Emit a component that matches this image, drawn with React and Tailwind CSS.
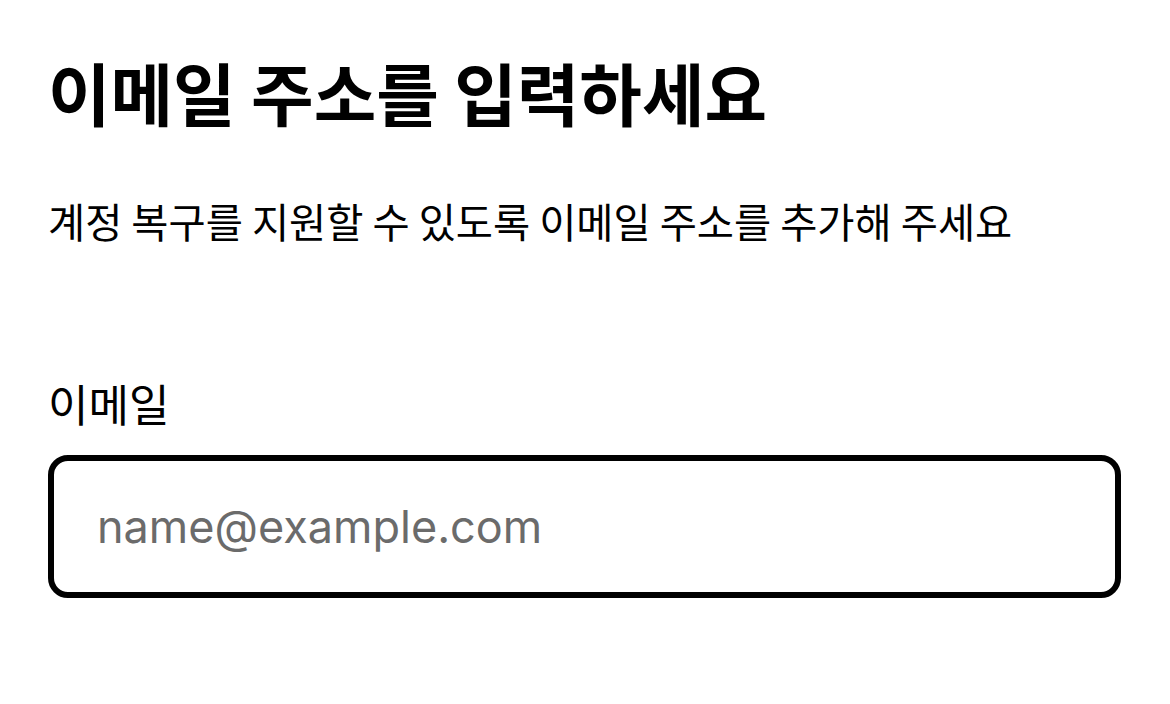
export default function App() {
  return (
    <div
      className="min-h-[704px] w-full bg-white px-[48px] pt-[54px] text-black"
      style={{ fontFamily: '"Noto Sans CJK KR", "Noto Sans", sans-serif' }}
    >
      <h1 className="text-[68px] font-bold leading-[76px]">이메일 주소를 입력하세요</h1>
      <p className="mt-[67px] text-[40.4px] leading-[48px]">
        계정 복구를 지원할 수 있도록 이메일 주소를 추가해 주세요
      </p>
      <label className="mt-[132px] block text-[44px] leading-[52px]" htmlFor="email">
        이메일
      </label>
      <input
        id="email"
        type="email"
        placeholder="name@example.com"
        className="mt-[26px] box-border h-[143px] w-[1073px] rounded-[20px] border-[6px] border-black px-[43px] text-[45px] outline-none placeholder:text-[#6b6b6b]"
        style={{ fontFamily: 'Inter, "Noto Sans CJK KR", sans-serif' }}
      />
    </div>
  )
}
